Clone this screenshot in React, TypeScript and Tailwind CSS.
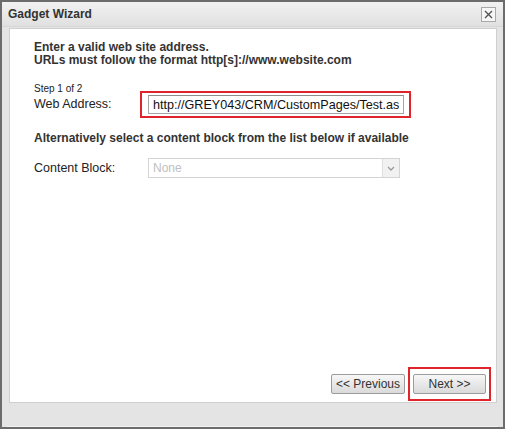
import { useState } from "react";

export default function App() {
  const [url, setUrl] = useState("http://GREY043/CRM/CustomPages/Test.aspx");

  return (
    <div
      className="w-[505px] h-[429px] bg-white"
      style={{ fontFamily: '"Liberation Sans", Arial, sans-serif' }}
    >
      <div className="w-full h-full flex flex-col border-2 border-[#6c6c6c] bg-[#e4e4e4]">
        {/* Title bar */}
        <div className="h-[25px] flex items-center justify-between pl-[6px] pr-[7px] bg-gradient-to-b from-[#f2f2f2] to-[#e0e0e0] border-b border-[#d6d6d6]">
          <span className="text-[12px] font-bold text-[#333]">Gadget Wizard</span>
          <button className="w-[15px] h-[15px] flex items-center justify-center border border-[#a9a9a9] bg-[#f6f6f6]">
            <svg width="9" height="9" viewBox="0 0 9 9">
              <path d="M1 1 L8 8 M8 1 L1 8" stroke="#555" strokeWidth="1.4" />
            </svg>
          </button>
        </div>

        {/* Body */}
        <div className="flex-1 flex flex-col ml-[7px] mr-[6px] mt-[1px] bg-white border border-[#cfcfcf] pl-[24px] pr-[5px] pt-[12px] pb-[1px] text-[#222]">
          <p className="text-[12px] font-bold leading-[13px] text-[#333]">
            Enter a valid web site address.
          </p>
          <p className="text-[12px] font-bold leading-[13px] text-[#333]">
            URLs must follow the format http[s]://www.website.com
          </p>

          <p className="mt-[16px] -mb-[4px] text-[10px] leading-[12px] text-[#222]">Step 1 of 2</p>
          <div className="flex items-center">
            <label className="w-[106px] text-[12.5px] text-[#222]">Web Address:</label>
            <div className="w-[271px] h-[27px] border-2 border-[#e0242c] flex items-center pl-[6px] pr-[5px]">
              <input
                value={url}
                onChange={(e) => setUrl(e.target.value)}
                className="w-full h-[19px] border border-[#a5a5a5] border-t-[#8d8d8d] bg-white px-[4px] text-[12.6px] text-[#111] outline-none"
              />
            </div>
          </div>

          <p className="mt-[14px] text-[12px] font-bold leading-[13px] text-[#333]">
            Alternatively select a content block from the list below if available
          </p>

          <div className="mt-[13px] flex items-center">
            <label className="w-[114px] text-[12.5px] text-[#222]">Content Block:</label>
            <div className="w-[252px] h-[20px] flex items-stretch border border-[#d4d4d4] bg-white">
              <span className="flex-1 pl-[4px] text-[12px] leading-[18px] text-[#c0c0c0]">None</span>
              <span className="w-[17px] flex items-center justify-center border-l border-[#dedede] bg-[#f1f1f1]">
                <svg width="8" height="5" viewBox="0 0 8 5">
                  <path d="M1 1 L4 4 L7 1" stroke="#9a9a9a" strokeWidth="1.3" fill="none" />
                </svg>
              </span>
            </div>
          </div>

          {/* Buttons */}
          <div className="mt-auto flex items-center justify-end">
            <button className="w-[74px] h-[20px] rounded-[2px] border border-[#9c9c9c] bg-gradient-to-b from-[#f7f7f7] to-[#dadada] text-[12px] text-[#333]">
              &lt;&lt; Previous
            </button>
            <div className="ml-[3px] w-[83px] h-[34px] border-2 border-[#e0242c] flex items-center justify-center">
              <button className="w-[73px] h-[20px] rounded-[2px] border border-[#9c9c9c] bg-gradient-to-b from-[#f7f7f7] to-[#dadada] text-[12px] text-[#333]">
                Next &gt;&gt;
              </button>
            </div>
          </div>
        </div>

        {/* Footer */}
        <div className="h-[24px] mx-[5px] border-b border-[#f2f2f2]" />
      </div>
    </div>
  );
}
